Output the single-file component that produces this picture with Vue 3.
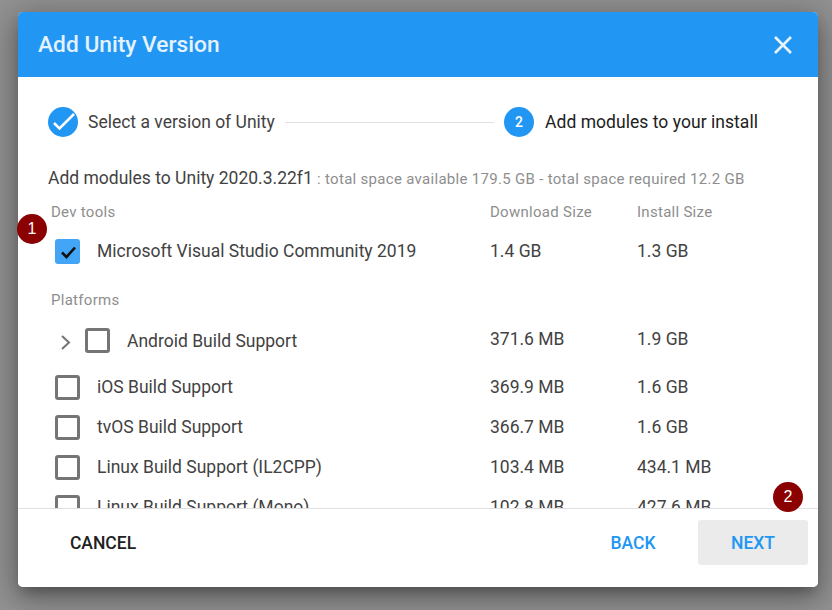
<script setup>
const platforms = [
  { name: 'Android Build Support', dl: '371.6 MB', inst: '1.9 GB', expand: true },
  { name: 'iOS Build Support', dl: '369.9 MB', inst: '1.6 GB' },
  { name: 'tvOS Build Support', dl: '366.7 MB', inst: '1.6 GB' },
  { name: 'Linux Build Support (IL2CPP)', dl: '103.4 MB', inst: '434.1 MB' },
  { name: 'Linux Build Support (Mono)', dl: '102.8 MB', inst: '427.6 MB' },
]
</script>

<template>
  <div class="screen">
    <div class="dialog">
      <header class="head">
        <h1>Add Unity Version</h1>
        <svg class="close" width="20" height="20" viewBox="0 0 20 20"><path d="M2 2L18 18M18 2L2 18" stroke="#e8f4fe" stroke-width="2.6" fill="none"/></svg>
      </header>

      <div class="body">
        <div class="stepper">
          <span class="dot">
            <svg width="30" height="30" viewBox="0 0 30 30"><path d="M6 16L11.5 21.5L26 7" stroke="#fff" stroke-width="2.6" fill="none"/></svg>
          </span>
          <span class="step-label">Select a version of Unity</span>
          <span class="line"></span>
          <span class="dot num">2</span>
          <span class="step-label active">Add modules to your install</span>
        </div>

        <p class="summary">Add modules to Unity 2020.3.22f1 <small>: total space available 179.5 GB - total space required 12.2 GB</small></p>

        <div class="cols heading first">
          <span class="group">Dev tools</span>
          <span>Download Size</span>
          <span>Install Size</span>
        </div>
        <div class="cols row devrow">
          <span class="name">
            <span class="box checked">
              <svg width="19" height="19" viewBox="0 0 19 19"><path d="M4 10.5L8.5 15L17 5.5" stroke="#111" stroke-width="2.6" fill="none"/></svg>
            </span>
            <span>Microsoft Visual Studio Community 2019</span>
          </span>
          <span>1.4 GB</span>
          <span>1.3 GB</span>
        </div>

        <div class="cols heading second">
          <span class="group">Platforms</span>
        </div>
        <div v-for="p in platforms" :key="p.name" class="cols row" :class="{ tall: p.expand }">
          <span class="name">
            <svg v-if="p.expand" class="chev" width="11" height="16" viewBox="0 0 11 16"><path d="M2 2L9 8.5L2 15" stroke="#757575" stroke-width="2" fill="none"/></svg>
            <span class="box"></span>
            <span>{{ p.name }}</span>
          </span>
          <span>{{ p.dl }}</span>
          <span>{{ p.inst }}</span>
        </div>
      </div>

      <footer class="foot">
        <button class="btn cancel">CANCEL</button>
        <span class="spacer"></span>
        <button class="btn primary back">BACK</button>
        <button class="btn primary next">NEXT</button>
      </footer>
    </div>

    <span class="badge b1">1</span>
    <span class="badge b2">2</span>
  </div>
</template>

<style scoped>
.screen {
  position: relative;
  width: 832px;
  height: 610px;
  overflow: hidden;
  background: #949494;
  padding: 12px 0 0 18px;
  box-sizing: border-box;
  font-family: Roboto, sans-serif;
}
.dialog {
  width: 800px;
  height: 575px;
  background: #fff;
  border-radius: 5px;
  overflow: hidden;
  display: flex;
  flex-direction: column;
  box-shadow: 0 8px 14px -4px rgba(0,0,0,.3), 0 10px 30px 4px rgba(0,0,0,.2), 0 4px 40px 8px rgba(0,0,0,.14);
}
.head {
  height: 65px;
  flex: none;
  background: #2196f3;
  display: flex;
  align-items: center;
  justify-content: space-between;
  padding: 0 25px 0 20px;
}
.head h1 {
  margin: 0;
  font-size: 22.75px;
  font-weight: 500;
  color: #e3f2fd;
}
.close { margin-top: 1px; }
.body {
  flex: 1;
  min-height: 0;
  overflow: hidden;
  padding: 30px 30px 0;
  color: #3a3a3a;
}
.stepper {
  display: flex;
  align-items: center;
  height: 30px;
  padding-right: 30px;
}
.dot {
  width: 30px;
  height: 30px;
  border-radius: 50%;
  background: #2196f3;
  color: #fff;
  display: flex;
  align-items: center;
  justify-content: center;
  font-size: 14px;
  font-weight: 500;
  flex: none;
}
.step-label {
  font-size: 17.5px;
  margin-left: 10px;
  color: #424242;
  position: relative;
  top: -0.5px;
}
.step-label.active {
  color: #212121;
  font-weight: 400;
  margin-left: 11px;
  letter-spacing: .04px;
}
.line {
  flex: 1;
  height: 1px;
  background: #e0e0e0;
  margin: 0 10px;
}
.summary {
  margin: 0;
  padding-top: 29px;
  font-size: 17.5px;
  line-height: 24px;
  color: #424242;
}
.summary small {
  font-size: 15px;
  letter-spacing: .3px;
  color: #8e8e8e;
}
.cols {
  display: grid;
  grid-template-columns: 442px 147px 1fr;
  align-items: center;
}
.heading {
  font-size: 15px;
  letter-spacing: .28px;
  color: #8e8e8e;
  height: 20px;
}
.heading.first { margin-top: 11px; }
.heading.second { margin-top: 19px; }
.group { padding-left: 3px; }
.row {
  height: 40px;
  font-size: 17.5px;
  color: #424242;
}
.devrow { margin-top: 9px; }
.row.tall { height: 50px; margin: 4px 0 3px; }
.tall .name { padding-left: 7px; padding-top: 3px; }
.name {
  display: flex;
  align-items: center;
  padding-left: 7px;
}
.box {
  width: 25px;
  height: 25px;
  box-sizing: border-box;
  border: 3px solid #757575;
  border-radius: 3px;
  margin-right: 17px;
  flex: none;
  display: flex;
  align-items: center;
  justify-content: center;
}
.box.checked {
  background: #42a5f5;
  border: 0;
}
.chev { margin: 2px 14px 0 5px; flex: none; }
.foot {
  height: 79px;
  flex: none;
  border-top: 1px solid #e0e0e0;
  box-sizing: border-box;
  display: flex;
  align-items: flex-start;
  padding: 11px 10px 0 30px;
  background: #fff;
}
.spacer { flex: 1; }
.btn {
  border: 0;
  background: none;
  font-family: Roboto, sans-serif;
  font-size: 17.5px;
  font-weight: 500;
  height: 45px;
  border-radius: 3px;
  padding: 0;
}
.cancel { color: #212121; width: 110px; }
.primary { color: #2196f3; }
.back { width: 110px; margin-right: 10px; }
.next { width: 110px; background: #ebebeb; }
.badge {
  position: absolute;
  width: 30px;
  height: 30px;
  border-radius: 50%;
  background: #8b0000;
  color: #fff;
  font-family: "Liberation Sans", Arial, sans-serif;
  font-size: 16px;
  display: flex;
  align-items: center;
  justify-content: center;
}
.b1 { left: 17px; top: 214px; }
.b2 { left: 773px; top: 482px; }
</style>

<style>
html, body { margin: 0; padding: 0; }
</style>
